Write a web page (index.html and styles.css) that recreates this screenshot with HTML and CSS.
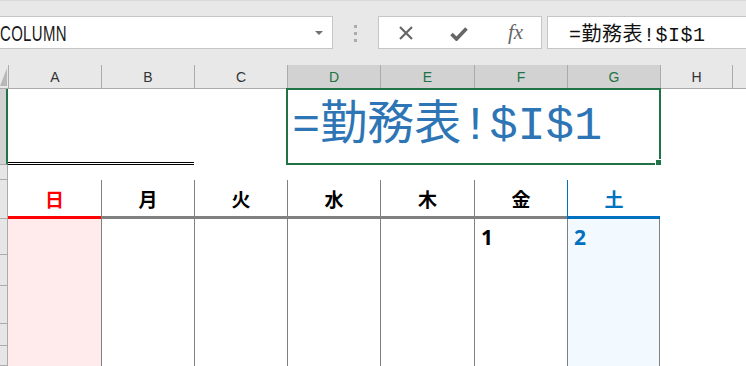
FILE: index.html
```html
<!DOCTYPE html>
<html lang="ja">
<head>
  <meta charset="UTF-8" />
  <title>勤務表</title>
  <link rel="stylesheet" href="styles.css">
</head>
<body>
  <div class="formula-bar">
    <div class="name-box">
      <span class="name-text">COLUMN</span>
      <span class="drop"></span>
    </div>
    <div class="grip"><i></i><i></i><i></i></div>
    <div class="fx-buttons">
      <svg class="icon-x" width="14" height="14" viewBox="0 0 14 14">
        <path d="M1 1 L13 13 M13 1 L1 13" stroke="#666" stroke-width="2.2" fill="none"/>
      </svg>
      <svg class="icon-check" width="18" height="14" viewBox="0 0 18 14">
        <path d="M1.5 7 L6.5 12 L16.5 1.5" stroke="#666" stroke-width="3.6" fill="none"/>
      </svg>
      <span class="fx">fx</span>
    </div>
    <div class="formula-input">=勤務表!$I$1</div>
  </div>

  <div class="sheet">
    <!-- column headers -->
    <div class="corner"></div>
    <div class="ch">A</div>
    <div class="ch">B</div>
    <div class="ch">C</div>
    <div class="ch sel">D</div>
    <div class="ch sel">E</div>
    <div class="ch sel">F</div>
    <div class="ch sel">G</div>
    <div class="ch">H</div>
    <div class="ch rest"></div>

    <!-- row 1 -->
    <div class="rh sel"></div>
    <div class="title-left"></div>
    <div></div>
    <div class="title-cell">=勤務表!$I$1<span class="handle"></span></div>
    <div></div>
    <div></div>

    <!-- row 2 -->
    <div class="rh"></div>
    <div class="blank-row"></div>

    <!-- row 3: weekdays -->
    <div class="rh"></div>
    <div class="dh sun">日</div>
    <div class="dh">月</div>
    <div class="dh">火</div>
    <div class="dh">水</div>
    <div class="dh">木</div>
    <div class="dh">金</div>
    <div class="dh sat">土</div>
    <div class="blank"></div>

    <!-- rows 4-8 -->
    <div class="rh"></div>
    <div class="dc sun"></div>
    <div class="dc"></div>
    <div class="dc"></div>
    <div class="dc"></div>
    <div class="dc"></div>
    <div class="dc">1</div>
    <div class="dc sat">2</div>
    <div class="blank"></div>

    <div class="rh"></div>
    <div class="dc sun"></div>
    <div class="dc"></div>
    <div class="dc"></div>
    <div class="dc"></div>
    <div class="dc"></div>
    <div class="dc"></div>
    <div class="dc sat"></div>
    <div class="blank"></div>

    <div class="rh"></div>
    <div class="dc sun"></div>
    <div class="dc"></div>
    <div class="dc"></div>
    <div class="dc"></div>
    <div class="dc"></div>
    <div class="dc"></div>
    <div class="dc sat"></div>
    <div class="blank"></div>

    <div class="rh"></div>
    <div class="dc sun"></div>
    <div class="dc"></div>
    <div class="dc"></div>
    <div class="dc"></div>
    <div class="dc"></div>
    <div class="dc"></div>
    <div class="dc sat"></div>
    <div class="blank"></div>

    <div class="rh"></div>
    <div class="dc sun"></div>
    <div class="dc"></div>
    <div class="dc"></div>
    <div class="dc"></div>
    <div class="dc"></div>
    <div class="dc"></div>
    <div class="dc sat"></div>
    <div class="blank"></div>
  </div>
</body>
</html>
```

FILE: styles.css
```css
body {
  margin: 0;
  width: 746px;
  height: 366px;
  overflow: hidden;
  background-color: #fff;
  font-family: "Liberation Sans", "Noto Sans CJK JP", sans-serif;
}

/* formula bar */
.formula-bar {
  display: flex;
  align-items: flex-start;
  box-sizing: border-box;
  height: 65px;
  padding-top: 16px;
  background-color: #e8e8e8;
  border-top: 1px solid #dadada;
}

.name-box {
  display: flex;
  align-items: center;
  box-sizing: border-box;
  width: 334px;
  height: 33px;
  margin-left: -1px;
  margin-top: -1px;
  background-color: #fff;
  border: 1px solid #c6c6c6;
  overflow: hidden;
}

.name-text {
  display: inline-block;
  font-size: 22px;
  color: #1a1a1a;
  transform: scaleX(0.68);
  transform-origin: left center;
  margin-top: 3px;
  letter-spacing: 0.5px;
}

.drop {
  margin-left: auto;
  margin-right: 9px;
  border-left: 4px solid transparent;
  border-right: 4px solid transparent;
  border-top: 4px solid #707070;
}

.grip {
  display: flex;
  flex-direction: column;
  align-items: center;
  gap: 4px;
  width: 45px;
  padding-top: 8px;
}

.grip i {
  width: 3px;
  height: 3px;
  background-color: #ababab;
}

.fx-buttons {
  display: flex;
  align-items: center;
  box-sizing: border-box;
  width: 164px;
  height: 33px;
  margin-top: -1px;
  background-color: #fff;
  border: 1px solid #c6c6c6;
}

.icon-x {
  margin-left: 20px;
}

.icon-check {
  margin-left: 37px;
  margin-top: 2px;
}

.fx {
  margin-left: 40px;
  font-family: "Liberation Serif", serif;
  font-style: italic;
  font-size: 21px;
  color: #666;
}

.formula-input {
  display: flex;
  align-items: center;
  flex: 1;
  box-sizing: border-box;
  height: 33px;
  margin-top: -1px;
  margin-left: 5px;
  margin-right: -10px;
  padding-left: 21px;
  background-color: #fff;
  border: 1px solid #c6c6c6;
  font-family: "Liberation Mono", "Noto Sans CJK JP", monospace;
  font-size: 20px;
  letter-spacing: 0.5px;
  color: #111;
}

/* sheet grid */
.sheet {
  display: grid;
  grid-template-columns: 8px 93px 93px 93px 93px 94px 93px 93px 72px 1fr;
  grid-template-rows: 24px 76px 15px 39px 36px 31px 38px 22px 20px;
}

.corner {
  position: relative;
  background-color: #e8e8e8;
  border-bottom: 1px solid #ababab;
  overflow: hidden;
}

.corner::after {
  content: "";
  position: absolute;
  right: 1px;
  bottom: 2px;
  border-left: 7px solid transparent;
  border-bottom: 18px solid #b8b8b8;
}

.ch {
  display: flex;
  align-items: center;
  justify-content: center;
  background-color: #e8e8e8;
  border-left: 1px solid #ababab;
  border-bottom: 1px solid #ababab;
  font-size: 14px;
  color: #333;
}

.ch.sel {
  background-color: #d2d2d2;
  color: #217346;
}

.rh {
  background-color: #e6e6e6;
  border-right: 1px solid #ababab;
  border-bottom: 1px solid #ababab;
}

.rh.sel {
  background-color: #d2d2d2;
  border-right: 2px solid #217346;
}

.title-left {
  grid-column: span 2;
  border-bottom: 3px double #000;
}

.title-cell {
  grid-column: span 4;
  position: relative;
  display: flex;
  align-items: center;
  margin: -1px -1px 0 -1px;
  padding-left: 4px;
  border: 2px solid #217346;
  font-family: "Liberation Mono", "Noto Sans CJK JP", monospace;
  font-size: 47px;
  line-height: 1;
  color: #2e75b6;
}

.handle {
  position: absolute;
  right: -3px;
  bottom: -3px;
  width: 5px;
  height: 5px;
  background-color: #217346;
  border: 1px solid #fff;
}

.blank-row {
  grid-column: span 9;
}

.blank {
  grid-column: span 2;
}

/* weekday header */
.dh {
  display: flex;
  align-items: center;
  justify-content: center;
  padding-top: 1px;
  border-left: 1px solid #808080;
  border-bottom: 3px solid #808080;
  font-family: "Noto Sans CJK JP", sans-serif;
  font-weight: bold;
  font-size: 19px;
  color: #000;
}

.dh.sun {
  border-left: none;
  border-bottom-color: #ff0000;
  color: #ff0000;
}

.dh.sat {
  border-left-color: #0070c0;
  border-bottom-color: #0070c0;
  color: #0070c0;
}

/* day cells */
.dc {
  padding: 8px 6px 0;
  border-left: 1px solid #808080;
  font-family: "Noto Sans", sans-serif;
  font-weight: bold;
  font-size: 21px;
  line-height: 1;
  color: #000;
}

.dc.sun {
  border-left: none;
  background-color: #ffebeb;
}

.dc.sat {
  border-right: 1px solid #808080;
  background-color: #f3faff;
  color: #0070c0;
}
```
